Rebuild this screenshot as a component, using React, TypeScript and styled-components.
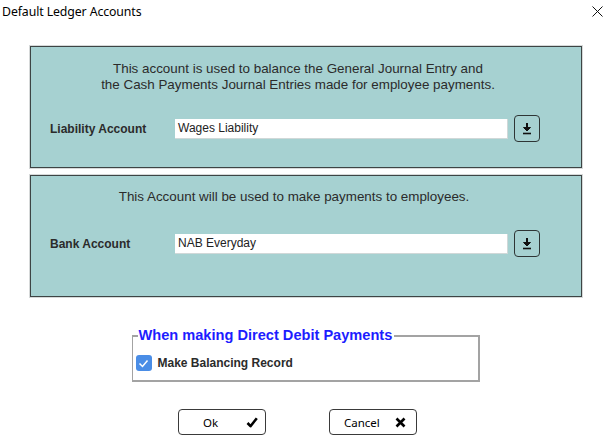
import React from "react";
import styled, { createGlobalStyle } from "styled-components";

const GlobalStyle = createGlobalStyle`
  html, body {
    margin: 0;
    padding: 0;
    background: #ffffff;
  }
  body {
    font-family: "Liberation Sans", Arial, sans-serif;
  }
`;

const Dialog = styled.div`
  width: 611px;
  height: 438px;
  background: #ffffff;
  display: flex;
  flex-direction: column;
  overflow: hidden;
`;

const TitleBar = styled.div`
  height: 22px;
  display: flex;
  align-items: center;
  justify-content: space-between;
  padding: 0 8px 0 2px;
`;

const Title = styled.span`
  font-family: "Noto Sans", "Open Sans", sans-serif;
  font-size: 12.3px;
  color: #000;
  letter-spacing: -0.1px;
`;

const CloseButton = styled.button`
  border: none;
  background: transparent;
  padding: 0;
  width: 12px;
  height: 12px;
  display: flex;
  align-items: center;
  justify-content: center;
`;

const Body = styled.div`
  padding: 24px 29px 0 30px;
  display: flex;
  flex-direction: column;
  gap: 7px;
`;

const Panel = styled.section<{ $padTop: number; $rowGap: number }>`
  height: 122px;
  box-sizing: border-box;
  background: #a6d1d1;
  border: 1px solid #3d4444;
  box-shadow: 0 0 0 1px #d6d9d9;
  padding: ${(p) => p.$padTop}px 0 0 19px;
  display: flex;
  flex-direction: column;
  gap: ${(p) => p.$rowGap}px;
`;

const Message = styled.p<{ $padRight: number }>`
  margin: 0;
  padding-right: ${(p) => p.$padRight}px;
  font-size: 13.4px;
  line-height: 16px;
  color: #2b2b2b;
  text-align: center;
  white-space: nowrap;
`;

const FieldRow = styled.div`
  display: flex;
  align-items: center;
  height: 27px;
`;

const FieldLabel = styled.label`
  width: 125px;
  font-size: 12px;
  font-weight: bold;
  color: #2b2b2b;
`;

const FieldInput = styled.div`
  width: 333px;
  height: 20px;
  box-sizing: border-box;
  background: #ffffff;
  border-bottom: 1px solid #d0d8d8;
  border-right: 1px solid #d0d8d8;
  padding: 0 3px;
  display: flex;
  align-items: center;
  font-size: 12px;
  color: #222;
`;

const LookupButton = styled.button`
  margin-left: 6px;
  width: 26px;
  height: 27px;
  box-sizing: border-box;
  border: 1px solid #2e3535;
  border-radius: 4px;
  background: transparent;
  padding: 0;
  display: flex;
  align-items: center;
  justify-content: center;
`;

const GroupBox = styled.fieldset`
  margin: 31px auto 0;
  width: 348px;
  box-sizing: border-box;
  border: 1px solid #a3a3a3;
  border-top-width: 2px;
  border-right-width: 2px;
  border-bottom-width: 2px;
  padding: 0 0 9px 3px;
  min-inline-size: 0;
`;

const Legend = styled.legend`
  padding: 0 2px 0 1px;
  margin-left: 2px;
  font-size: 14.6px;
  font-weight: bold;
  color: #1d1dff;
  line-height: 15px;
`;

const CheckRow = styled.label`
  display: flex;
  align-items: center;
  gap: 6px;
  margin-top: 12px;
  font-size: 12px;
  font-weight: bold;
  color: #2b2b2b;
`;

const CheckBox = styled.span`
  width: 16px;
  height: 16px;
  border-radius: 3px;
  background: #4a8de6;
  display: flex;
  align-items: center;
  justify-content: center;
`;

const ButtonBar = styled.div`
  margin-top: 27px;
  display: flex;
  gap: 63px;
  padding-left: 178px;
`;

const ActionButton = styled.button<{ $textPad: number; $iconPad: number }>`
  width: 88px;
  height: 26px;
  box-sizing: border-box;
  border: 1px solid #3a3a3a;
  border-radius: 4px;
  background: #ffffff;
  display: flex;
  align-items: center;
  justify-content: space-between;
  padding: 0 ${(p) => p.$iconPad}px 0 ${(p) => p.$textPad}px;
  font-family: "Noto Sans", "Open Sans", sans-serif;
  font-size: 11.5px;
  color: #000;
`;

const DownIcon = () => (
  <svg width="10" height="13" viewBox="0 0 10 13">
    <path d="M5 1v6" stroke="#111" strokeWidth="2" />
    <path d="M1.5 5.5L5 9l3.5-3.5z" fill="#111" stroke="#111" strokeWidth="1" strokeLinejoin="round" />
    <path d="M1 11.5h8" stroke="#111" strokeWidth="1.6" />
  </svg>
);

const CloseIcon = () => (
  <svg width="11" height="11" viewBox="0 0 11 11">
    <path d="M0.5 0.5l10 10M10.5 0.5l-10 10" stroke="#111" strokeWidth="1" />
  </svg>
);

const TickIcon = () => (
  <svg width="11" height="9" viewBox="0 0 11 9">
    <path d="M1.5 4.5l3 3 5-6" fill="none" stroke="#ffffff" strokeWidth="1.5" />
  </svg>
);

const OkIcon = () => (
  <svg width="12" height="11" viewBox="0 0 12 11">
    <path d="M1.5 6l3 3.2L10.8 1.2" fill="none" stroke="#000" strokeWidth="2.6" strokeLinejoin="round" />
  </svg>
);

const CancelIcon = () => (
  <svg width="11" height="11" viewBox="0 0 11 11">
    <path d="M1.5 1.5l8 8M9.5 1.5l-8 8" stroke="#000" strokeWidth="2.6" />
  </svg>
);

export default function App() {
  return (
    <>
      <GlobalStyle />
      <Dialog>
        <TitleBar>
          <Title>Default Ledger Accounts</Title>
          <CloseButton>
            <CloseIcon />
          </CloseButton>
        </TitleBar>
        <Body>
          <Panel $padTop={14} $rowGap={22}>
            <Message $padRight={35}>
              This account is used to balance the General Journal Entry and
              <br />
              the Cash Payments Journal Entries made for employee payments.
            </Message>
            <FieldRow>
              <FieldLabel>Liability Account</FieldLabel>
              <FieldInput>Wages Liability</FieldInput>
              <LookupButton>
                <DownIcon />
              </LookupButton>
            </FieldRow>
          </Panel>
          <Panel $padTop={13} $rowGap={25}>
            <Message $padRight={43}>This Account will be used to make payments to employees.</Message>
            <FieldRow>
              <FieldLabel>Bank Account</FieldLabel>
              <FieldInput>NAB Everyday</FieldInput>
              <LookupButton>
                <DownIcon />
              </LookupButton>
            </FieldRow>
          </Panel>
        </Body>
        <GroupBox>
          <Legend>When making Direct Debit Payments</Legend>
          <CheckRow>
            <CheckBox>
              <TickIcon />
            </CheckBox>
            Make Balancing Record
          </CheckRow>
        </GroupBox>
        <ButtonBar>
          <ActionButton $textPad={24} $iconPad={7}>
            Ok
            <OkIcon />
          </ActionButton>
          <ActionButton $textPad={14} $iconPad={10}>
            Cancel
            <CancelIcon />
          </ActionButton>
        </ButtonBar>
      </Dialog>
    </>
  );
}
